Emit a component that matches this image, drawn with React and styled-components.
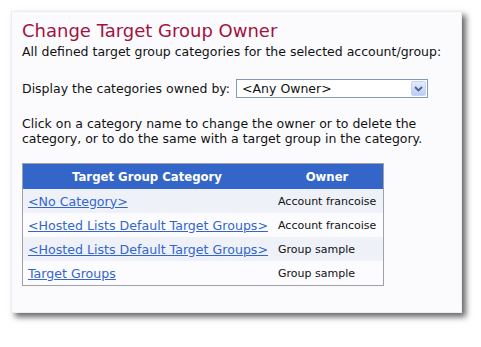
import styled, { createGlobalStyle } from "styled-components";

const GlobalStyle = createGlobalStyle`
  body {
    margin: 0;
    background: #ffffff;
    font-family: "DejaVu Sans", Verdana, sans-serif;
  }
`;

const Page = styled.div`
  padding: 11px 0 30px 11px;
`;

const Panel = styled.div`
  width: 451px;
  height: 302px;
  box-sizing: border-box;
  padding: 9px 11px 0 10px;
  background: #fbfbfe;
  border: 1px solid #ececf2;
  box-shadow: 4px 4px 6px rgba(0, 0, 0, 0.6);
`;

const Title = styled.h1`
  margin: 0;
  font-size: 18px;
  font-weight: normal;
  color: #a3123f;
  line-height: 20px;
`;

const Text = styled.p`
  margin: ${({ gap }) => gap || 0} 0 0 0;
  font-size: 12.5px;
  line-height: 15px;
  color: #111111;
`;

const Filter = styled.div`
  display: flex;
  align-items: center;
  gap: 6px;
  margin-top: 20px;
  font-size: 12.5px;
  color: #111111;
`;

const Select = styled.div`
  width: 192px;
  height: 19px;
  box-sizing: border-box;
  border: 1px solid #7f9db9;
  background: #ffffff;
  display: flex;
  align-items: center;
  justify-content: space-between;
  padding: 0 1px 0 5px;
  font-size: 12.5px;
`;

const ArrowButton = styled.div`
  width: 15px;
  height: 15px;
  box-sizing: border-box;
  border: 1px solid #c3d3fd;
  border-radius: 2px;
  background: linear-gradient(#e4ecfd, #bccdf5);
  display: flex;
  align-items: center;
  justify-content: center;
`;

const Table = styled.table`
  margin-top: 17px;
  width: 362px;
  border-collapse: collapse;
  border: 1px solid #a0a0a8;
  font-size: 11px;
`;

const HeadCell = styled.th`
  height: 25px;
  padding: 0;
  background: #3465c8;
  color: #ffffff;
  font-size: 11.7px;
  font-weight: bold;
  text-align: center;
`;

const Row = styled.tr`
  background: ${({ alt }) => (alt ? "#eef1f8" : "#fcfcfe")};
`;

const Cell = styled.td`
  height: 24px;
  padding: 0 0 0 ${({ pad }) => pad || "5px"};
  white-space: nowrap;
  color: #111111;
`;

const Link = styled.a`
  font-size: 12.6px;
  color: #3366cc;
  text-decoration: underline;
  cursor: pointer;
`;

const rows = [
  { name: "<No Category>", owner: "Account francoise" },
  { name: "<Hosted Lists Default Target Groups>", owner: "Account francoise" },
  { name: "<Hosted Lists Default Target Groups>", owner: "Group sample" },
  { name: "Target Groups", owner: "Group sample" },
];

export default function App() {
  return (
    <Page>
      <GlobalStyle />
      <Panel>
        <Title>Change Target Group Owner</Title>
        <Text gap="3px">All defined target group categories for the selected account/group:</Text>
        <Filter>
          <span>Display the categories owned by:</span>
          <Select>
            <span>&lt;Any Owner&gt;</span>
            <ArrowButton>
              <svg width="9" height="6" viewBox="0 0 9 6">
                <path d="M1 1 L4.5 4.5 L8 1" fill="none" stroke="#4d6185" strokeWidth="1.8" />
              </svg>
            </ArrowButton>
          </Select>
        </Filter>
        <Text gap="18px">
          Click on a category name to change the owner or to delete the category, or to do the same
          with a target group in the category.
        </Text>
        <Table>
          <thead>
            <tr>
              <HeadCell style={{ width: 248 }}>Target Group Category</HeadCell>
              <HeadCell>Owner</HeadCell>
            </tr>
          </thead>
          <tbody>
            {rows.map((r, i) => (
              <Row key={i} alt={i % 2 === 0}>
                <Cell>
                  <Link>{r.name}</Link>
                </Cell>
                <Cell pad="7px">{r.owner}</Cell>
              </Row>
            ))}
          </tbody>
        </Table>
      </Panel>
    </Page>
  );
}
